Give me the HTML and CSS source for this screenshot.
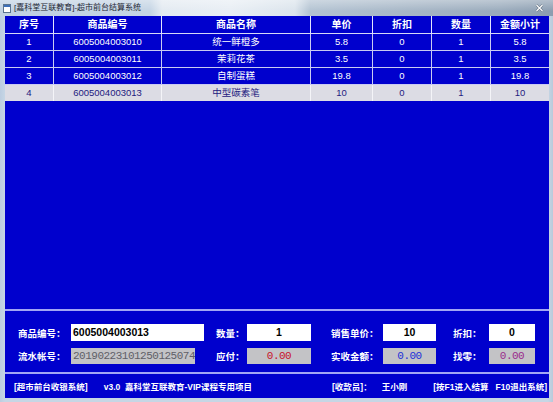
FILE: index.html
```html
<!DOCTYPE html>
<html lang="zh-CN">
<head>
<meta charset="utf-8">
<title>[嘉科堂互联教育]-超市前台结算系统</title>
<link rel="stylesheet" href="styles.css">
</head>
<body>
<div class="window">
  <div class="titlebar">
    <svg class="app-icon" width="8" height="9" viewBox="0 0 8 9">
      <rect x="0.5" y="0.5" width="7" height="8" fill="#ffffff" stroke="#5a7390"/>
      <rect x="1" y="1" width="6" height="2" fill="#3d6fb8"/>
    </svg>
    <span class="title">[嘉科堂互联教育]-超市前台结算系统</span>
    <svg class="close" width="9" height="8" viewBox="0 0 9 8">
      <path d="M1.5 1 L7.5 7 M7.5 1 L1.5 7" stroke="#5d6c7c" stroke-width="2.4"/>
      <path d="M1.5 1 L7.5 7 M7.5 1 L1.5 7" stroke="#ffffff" stroke-width="1.2"/>
    </svg>
  </div>
  <div class="client">
    <div class="tbl">
      <div class="cell head">序号</div>
      <div class="cell head">商品编号</div>
      <div class="cell head">商品名称</div>
      <div class="cell head">单价</div>
      <div class="cell head">折扣</div>
      <div class="cell head">数量</div>
      <div class="cell head last">金额小计</div>

      <div class="cell">1</div>
      <div class="cell">6005004003010</div>
      <div class="cell">统一鲜橙多</div>
      <div class="cell">5.8</div>
      <div class="cell">0</div>
      <div class="cell">1</div>
      <div class="cell last">5.8</div>

      <div class="cell">2</div>
      <div class="cell">6005004003011</div>
      <div class="cell">茉莉花茶</div>
      <div class="cell">3.5</div>
      <div class="cell">0</div>
      <div class="cell">1</div>
      <div class="cell last">3.5</div>

      <div class="cell">3</div>
      <div class="cell">6005004003012</div>
      <div class="cell">自制蛋糕</div>
      <div class="cell">19.8</div>
      <div class="cell">0</div>
      <div class="cell">1</div>
      <div class="cell last">19.8</div>

      <div class="cell sel">4</div>
      <div class="cell sel">6005004003013</div>
      <div class="cell sel">中型碳素笔</div>
      <div class="cell sel">10</div>
      <div class="cell sel">0</div>
      <div class="cell sel">1</div>
      <div class="cell sel last">10</div>
    </div>
    <div class="fill"></div>
    <div class="sep"></div>
    <div class="form">
      <div class="lbl">商品编号：</div>
      <div class="field white left wide">6005004003013</div>
      <div class="lbl">数量：</div>
      <div class="field white w64">1</div>
      <div class="lbl">销售单价：</div>
      <div class="field white w53">10</div>
      <div class="lbl">折扣：</div>
      <div class="field white w46">0</div>

      <div class="lbl">流水帐号：</div>
      <div class="field grey left serial">20190223101250125074</div>
      <div class="lbl">应付：</div>
      <div class="field grey w64 red">0.00</div>
      <div class="lbl">实收金额：</div>
      <div class="field grey w53 blue">0.00</div>
      <div class="lbl">找零：</div>
      <div class="field grey w46 purple">0.00</div>
    </div>
    <div class="sep"></div>
    <div class="footer">
      <span class="f-sys">[超市前台收银系统]</span>
      <span class="f-ver">v3.0&nbsp;&nbsp;嘉科堂互联教育-VIP课程专用项目</span>
      <span class="f-cashier">[收款员]：</span>
      <span class="f-name">王小刚</span>
      <span class="f-keys">[按F1进入结算   F10退出系统]</span>
    </div>
  </div>
</div>
</body>
</html>
```

FILE: styles.css
```css
* { box-sizing: border-box; }

html, body {
  margin: 0;
  padding: 0;
}

body {
  width: 553px;
  height: 402px;
  overflow: hidden;
  background: #c3d3e2;
  font-family: "Liberation Sans", "Noto Sans CJK SC", sans-serif;
}

.window {
  width: 553px;
  height: 402px;
  display: flex;
  flex-direction: column;
  background: linear-gradient(to right, #bccde0 0px, #c6d6e5 5px, #c6d6e5 548px, #b9cadb 553px);
}

.titlebar {
  height: 16px;
  flex: none;
  display: flex;
  align-items: center;
  padding-left: 3px;
  background:
    linear-gradient(to bottom, rgba(255,255,255,0.35), rgba(255,255,255,0) 70%),
    linear-gradient(to right, #c0d1e2 0px, #c4d4e4 150px, #e3eaf1 162px, #e8eef4 230px, #dbe4ec 295px, #b3c3d2 310px, #a7b7c7 400px, #9aabbc 500px, #8b9db0 553px);
}

.app-icon {
  flex: none;
  display: block;
}

.title {
  margin-left: 3px;
  font-size: 8px;
  line-height: 16px;
  color: #1d2733;
  white-space: nowrap;
}

.close {
  margin-left: auto;
  margin-right: 9px;
  display: block;
}

.client {
  margin-left: 5px;
  width: 544px;
  height: 382px;
  flex: none;
  background: #0000cd;
  display: flex;
  flex-direction: column;
}

.tbl {
  display: grid;
  grid-template-columns: 49px 108px 149px 62px 59px 59px 58px;
  grid-template-rows: 18px 17px 17px 17px 16px;
  flex: none;
}

.cell {
  border-right: 1px solid #c9cbf2;
  border-bottom: 1px solid #c9cbf2;
  color: #ffffff;
  font-size: 9.5px;
  line-height: 16px;
  text-align: center;
  white-space: nowrap;
}

.cell.head {
  font-weight: bold;
  font-size: 10px;
  line-height: 17px;
  border-right-color: #e4e6ff;
  border-bottom-color: #d6d8f6;
}

.cell.last { border-right: none; }

.cell.sel {
  background: #dcdce4;
  color: #1e2080;
  border-bottom: none;
  border-right-color: #f4f4f8;
}

.cell.sel.last { border-right: none; }

.fill { flex: 1; }

.sep {
  height: 2px;
  flex: none;
  background: #a3a6f4;
}

.form {
  height: 61px;
  flex: none;
  padding: 13px 0 0 13px;
  display: grid;
  grid-template-columns: 53px 145px 31px 84px 52px 70px 36px 46px;
  grid-template-rows: 17px 16px;
  row-gap: 7px;
  align-items: center;
}

.lbl {
  color: #ffffff;
  font-weight: bold;
  font-size: 9.5px;
  white-space: nowrap;
}

.field {
  height: 100%;
  text-align: center;
  white-space: nowrap;
  overflow: hidden;
}

.field.white {
  background: #ffffff;
  color: #000000;
  font-weight: bold;
  font-size: 10.5px;
  line-height: 17px;
}

.field.wide { width: 133px; }
.field.w64 { width: 64px; }
.field.w53 { width: 53px; }
.field.w46 { width: 46px; }

.field.left {
  text-align: left;
  padding-left: 2px;
}

.field.grey {
  background: #c3c3c6;
  font-family: "Liberation Mono", "Noto Sans CJK SC", monospace;
  font-size: 11px;
  letter-spacing: -0.5px;
  line-height: 16px;
}

.field.serial {
  width: 124px;
  color: #5f5f66;
}

.field.red { color: #c8102a; }
.field.blue { color: #1c2fd8; }
.field.purple { color: #9a2a8c; }

.footer {
  height: 24px;
  flex: none;
  display: flex;
  align-items: center;
  padding-left: 9px;
  color: #ffffff;
  font-weight: bold;
  font-size: 8.5px;
  white-space: pre;
}

.f-ver { margin-left: 16px; }
.f-cashier { margin-left: auto; }
.f-name { margin-left: 10px; }
.f-keys { margin-left: 26px; margin-right: 2px; }
```
